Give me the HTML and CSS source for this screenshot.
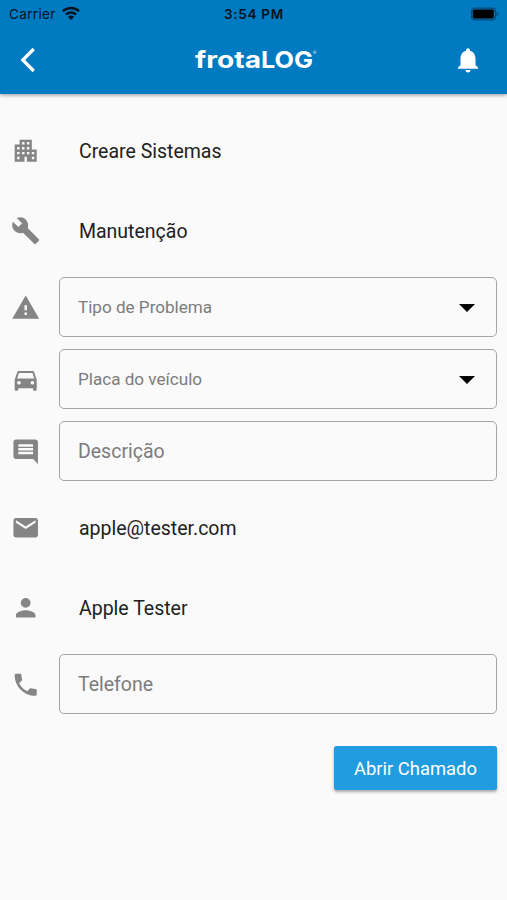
FILE: index.html
```html
<!DOCTYPE html>
<html lang="pt-BR">
<head>
<meta charset="utf-8">
<title>frotaLOG</title>
<link rel="stylesheet" href="styles.css">
</head>
<body>
<header class="header">
  <div class="status">
    <div class="carrier"><span class="carrier-name">Carrier</span>
      <svg class="wifi" viewBox="0 0 18 14"><g fill="none" stroke="#06121c" stroke-width="2.5"><path d="M.9 5.200a11.600 11.600 0 0 1 16.200 0"/><path d="M4 8.500a7.200 7.200 0 0 1 10 0"/></g><path fill="#06121c" d="M9 14 5.900 10.900a4.400 4.400 0 0 1 6.200 0z"/></svg>
    </div>
    <span class="time">3:54 PM</span>
    <svg class="battery" viewBox="0 0 30 14"><rect x=".7" y=".7" width="25.600" height="12.600" rx="3.500" fill="none" stroke="#044a78" stroke-width="1.400"/><rect x="2" y="2.200" width="22.500" height="9.600" rx="1.800"/><path fill="#044a78" d="M27.500 4.800q2 .6 2 2.200t-2 2.200z"/></svg>
  </div>
  <div class="toolbar">
    <svg class="back" viewBox="0 0 16 26"><path d="M13.700 2 2.800 13l10.900 11" fill="none" stroke="#fff" stroke-width="3.200"/></svg>
    <svg class="logo" viewBox="0 0 124 30"><text class="logo-text" x="1" y="23" textLength="66" lengthAdjust="spacingAndGlyphs">frota</text><text class="logo-text" x="67" y="23" textLength="52" lengthAdjust="spacingAndGlyphs">LOG</text><text class="logo-mark" x="119" y="9">®</text></svg>
    <svg class="bell" viewBox="0 0 24 24"><path d="M12 22c1.100 0 2-.9 2-2h-4c0 1.100.9 2 2 2zm6-6v-5c0-3.070-1.630-5.640-4.500-6.320V4c0-.83-.67-1.500-1.500-1.500s-1.500.67-1.500 1.500v.68C7.640 5.360 6 7.920 6 11v5l-2 2v1h16v-1l-2-2z"/></svg>
  </div>
</header>
<main class="form">
  <div class="row row-text">
    <svg class="icon" viewBox="0 0 24 24"><path d="M17 11V3H7v4H3v14h8v-4h2v4h8V11h-4zM7 19H5v-2h2v2zm0-4H5v-2h2v2zm0-4H5V9h2v2zm4 4H9v-2h2v2zm0-4H9V9h2v2zm0-4H9V5h2v2zm4 8h-2v-2h2v2zm0-4h-2V9h2v2zm0-4h-2V5h2v2zm4 12h-2v-2h2v2zm0-4h-2v-2h2v2z"/></svg>
    <span class="value">Creare Sistemas</span>
  </div>
  <div class="row row-text">
    <svg class="icon" viewBox="0 0 24 24"><path d="M22.700 19l-9.100-9.100c.9-2.300.4-5-1.500-6.900-2-2-5-2.400-7.400-1.300L9 6 6 9 1.600 4.700C.4 7.100.9 10.100 2.900 12.100c1.900 1.900 4.600 2.400 6.900 1.500l9.100 9.100c.4.4 1 .4 1.400 0l2.300-2.300c.5-.4.5-1.100.1-1.400z"/></svg>
    <span class="value">Manutenção</span>
  </div>
  <div class="row">
    <svg class="icon" viewBox="0 0 24 24"><path d="M1 21h22L12 2 1 21zm12-3h-2v-2h2v2zm0-4h-2v-4h2v4z"/></svg>
    <div class="field select"><span>Tipo de Problema</span><svg class="arrow" viewBox="0 0 16 8"><path d="M0 0h16L8 8z"/></svg></div>
  </div>
  <div class="row">
    <svg class="icon" viewBox="0 0 24 24"><path d="M18.920 6.010C18.720 5.420 18.160 5 17.500 5h-11c-.66 0-1.210.42-1.420 1.010L3 12v8c0 .55.45 1 1 1h1c.55 0 1-.45 1-1v-1h12v1c0 .55.45 1 1 1h1c.55 0 1-.45 1-1v-8l-2.080-5.990zM6.500 16c-.83 0-1.500-.67-1.500-1.500S5.670 13 6.500 13s1.500.67 1.500 1.500S7.330 16 6.500 16zm11 0c-.83 0-1.500-.67-1.500-1.500s.67-1.500 1.500-1.500 1.500.67 1.500 1.500-.67 1.500-1.500 1.500zM5 11l1.500-4.500h11L19 11H5z"/></svg>
    <div class="field select"><span>Placa do veículo</span><svg class="arrow" viewBox="0 0 16 8"><path d="M0 0h16L8 8z"/></svg></div>
  </div>
  <div class="row">
    <svg class="icon" viewBox="0 0 24 24"><path d="M21.990 4c0-1.100-.89-2-1.990-2H4c-1.100 0-2 .9-2 2v12c0 1.100.9 2 2 2h14l4 4-.01-18zM18 14H6v-2h12v2zm0-3H6V9h12v2zm0-3H6V6h12v2z"/></svg>
    <div class="field">Descrição</div>
  </div>
  <div class="row row-text">
    <svg class="icon" viewBox="0 0 24 24"><path d="M20 4H4c-1.100 0-1.990.9-1.990 2L2 18c0 1.100.9 2 2 2h16c1.100 0 2-.9 2-2V6c0-1.100-.9-2-2-2zm0 4l-8 5-8-5V6l8 5 8-5v2z"/></svg>
    <span class="value">apple@tester.com</span>
  </div>
  <div class="row row-text">
    <svg class="icon" viewBox="0 0 24 24"><path d="M12 12c2.210 0 4-1.790 4-4s-1.790-4-4-4-4 1.790-4 4 1.790 4 4 4zm0 2c-2.670 0-8 1.340-8 4v2h16v-2c0-2.660-5.330-4-8-4z"/></svg>
    <span class="value">Apple Tester</span>
  </div>
  <div class="row">
    <svg class="icon" viewBox="0 0 24 24"><path d="M6.620 10.790c1.440 2.830 3.760 5.140 6.590 6.590l2.200-2.200c.27-.27.67-.36 1.020-.24 1.120.37 2.330.57 3.570.57.55 0 1 .45 1 1V20c0 .55-.45 1-1 1-9.390 0-17-7.610-17-17 0-.55.45-1 1-1h3.500c.55 0 1 .45 1 1 0 1.250.2 2.450.57 3.570.11.35.03.74-.25 1.020l-2.200 2.200z"/></svg>
    <div class="field">Telefone</div>
  </div>
  <button class="submit">Abrir Chamado</button>
</main>
</body>
</html>
```
FILE: styles.css
```css
* { box-sizing: border-box; }
body {
  margin: 0;
  min-height: 900px;
  background: #fafafa;
  font-family: Roboto, "Liberation Sans", sans-serif;
  color: #212121;
}
svg { display: block; flex: none; }
.header {
  height: 94px;
  background: #007bc2;
  box-shadow: 0 1px 4px rgba(0, 0, 0, .4);
}
.status {
  display: grid;
  grid-template-columns: 1fr auto 1fr;
  align-items: center;
  height: 27px;
  padding: 1px 8px 0 9px;
  font: 13.500px/26px Inter, "Liberation Sans", sans-serif;
  color: #06121c;
}
.carrier { display: flex; align-items: center; gap: 6px; }
.carrier-name { letter-spacing: .35px; }
.wifi { width: 18px; height: 14px; margin-top: -2px; }
.time { font-weight: 600; letter-spacing: .7px; }
.battery { width: 28px; height: 14px; justify-self: end; margin-top: -1px; }
.toolbar {
  display: flex;
  align-items: center;
  justify-content: space-between;
  height: 66px;
  padding: 0 24px 0 20px;
}
.back { width: 16px; height: 26px; }
.logo { width: 124px; height: 30px; margin-left: 22px; overflow: visible; }
.logo-text { font: 700 23.500px Inter, sans-serif; fill: #fff; }
.logo-mark { font: 4px Roboto, sans-serif; fill: #fff; }
.bell { width: 30px; height: 30px; fill: #fff; }
.form { display: flex; flex-direction: column; padding: 16.300px 10px 0 10.700px; }
.row { display: flex; align-items: center; gap: 19.400px; height: 72px; }
.row-text { height: 80.500px; }
.icon { width: 29.400px; height: 29.400px; fill: #858585; }
.value { padding: 1px 0 0 19.500px; font-size: 19.500px; }
.field {
  display: flex;
  align-items: center;
  flex: 1;
  height: 60px;
  padding: 0 21px 0 17.500px;
  border: 1.300px solid #a5a5a5;
  border-radius: 5px;
  font-size: 19.500px;
  color: #7c7c7c;
}
.select { justify-content: space-between; font-size: 17.100px; }
.arrow { width: 16px; height: 8px; margin-top: 1px; }
.submit {
  align-self: flex-end;
  width: 163px;
  height: 44px;
  margin-top: 26px;
  padding: 0;
  border: 0;
  border-radius: 2.500px;
  background: #219ce0;
  box-shadow: 0 2px 3px rgba(0, 0, 0, .32);
  font: 18.400px Roboto, sans-serif;
  color: #fff;
}
```
